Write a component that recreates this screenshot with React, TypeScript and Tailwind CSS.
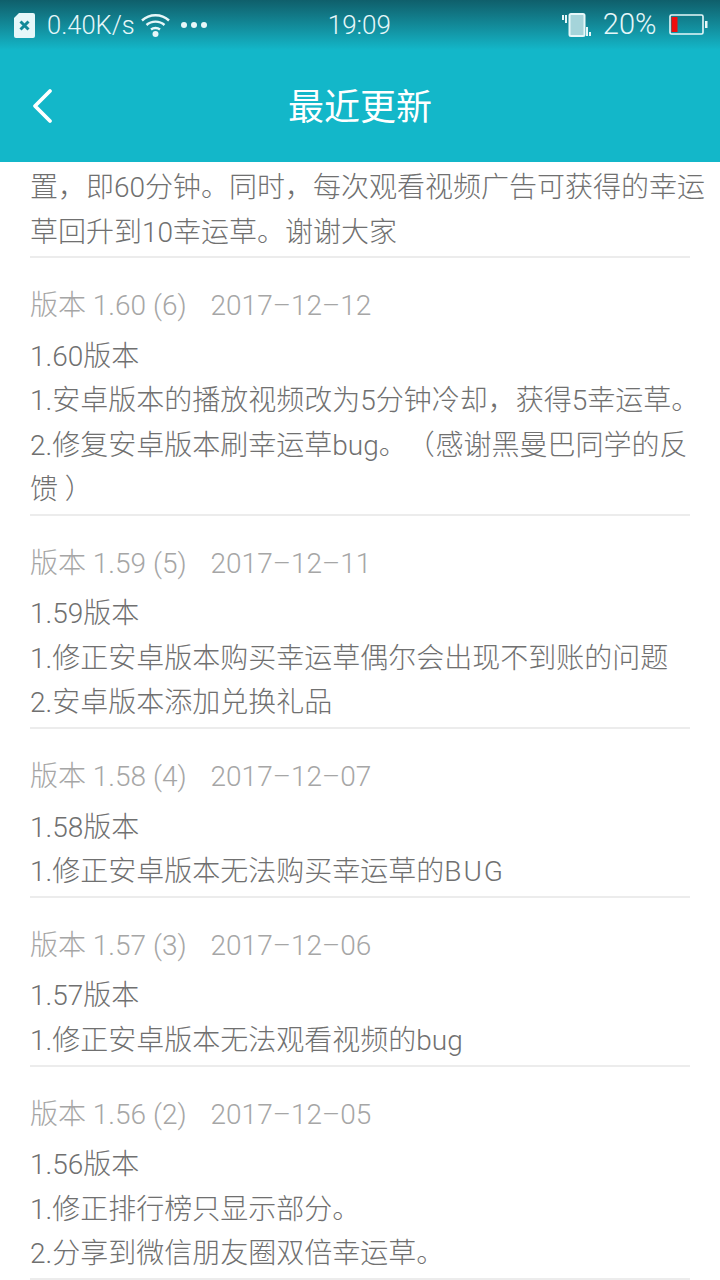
const sections = [
  { v: "版本 1.60 (6)", d: "2017–12–12", lines: ["1.60版本", "1.安卓版本的播放视频改为5分钟冷却，获得5幸运草。", "2.修复安卓版本刷幸运草bug。（ 感谢黑曼巴同学的反", "馈 ）"] },
  { v: "版本 1.59 (5)", d: "2017–12–11", lines: ["1.59版本", "1.修正安卓版本购买幸运草偶尔会出现不到账的问题", "2.安卓版本添加兑换礼品"] },
  { v: "版本 1.58 (4)", d: "2017–12–07", lines: ["1.58版本", "1.修正安卓版本无法购买幸运草的BUG"] },
  { v: "版本 1.57 (3)", d: "2017–12–06", lines: ["1.57版本", "1.修正安卓版本无法观看视频的bug"] },
  { v: "版本 1.56 (2)", d: "2017–12–05", lines: ["1.56版本", "1.修正排行榜只显示部分。", "2.分享到微信朋友圈双倍幸运草。"] },
];

const font = "font-['Roboto','Noto_Sans_CJK_SC',sans-serif]";

export default function App() {
  return (
    <div className={`w-[720px] h-[1280px] overflow-hidden bg-white font-light ${font}`}>
      <header className="h-[162px] bg-[#13b7c9] relative">
        <div className="h-[50px] bg-gradient-to-b from-[#0f5f6b] to-[#13b7c9] flex items-center text-[#e6f7f9] text-[25.5px] pl-[14px] pr-[12px]">
          <svg width="21" height="25" viewBox="0 0 21 25" className="shrink-0">
            <path d="M5 0H19a2 2 0 0 1 2 2V23a2 2 0 0 1-2 2H2a2 2 0 0 1-2-2V5Z" fill="#e6f7f9" />
            <path d="M6.5 8.5L14.5 16.5M14.5 8.5L6.5 16.5" stroke="#148a99" strokeWidth="3" />
          </svg>
          <span className="ml-[12px] w-[88px]">0.40K/s</span>
          <svg width="30" height="26" viewBox="0 0 30 26" className="ml-[6px] shrink-0" fill="none" stroke="#e6f7f9" strokeWidth="2.4">
            <path d="M1 8.5C8.5 1.5 20.5 1.5 28 8.5" />
            <path d="M5.5 13C10.5 8.5 18.5 8.5 23.5 13" />
            <path d="M10 17.5C12.5 15.5 16.5 15.5 19 17.5" />
            <circle cx="14.5" cy="22" r="3" fill="#e6f7f9" stroke="none" />
          </svg>
          <div className="ml-[10px] flex gap-[4px]">
            <i className="w-[6px] h-[6px] rounded-full bg-[#e6f7f9]" />
            <i className="w-[6px] h-[6px] rounded-full bg-[#e6f7f9]" />
            <i className="w-[6px] h-[6px] rounded-full bg-[#e6f7f9]" />
          </div>
          <span className="ml-[121px] w-[65px] text-[26px]">19:09</span>
          <svg width="30" height="26" viewBox="0 0 30 26" className="ml-[170px] shrink-0">
            <rect x="1" y="3" width="2" height="5" fill="#e6f7f9" />
            <rect x="4" y="3" width="2" height="8" fill="#e6f7f9" />
            <rect x="8.5" y="2" width="15" height="22" rx="1.5" fill="#a5d4da" stroke="#e6f7f9" strokeWidth="2" />
            <rect x="25" y="15" width="2" height="9" fill="#e6f7f9" />
            <rect x="28" y="20" width="2" height="4" fill="#e6f7f9" />
          </svg>
          <span className="ml-[12px] w-[57px] text-[29px]">20%</span>
          <svg width="39" height="22" viewBox="0 0 39 22" className="ml-[11px] shrink-0">
            <rect x="1" y="1" width="33" height="19" rx="1.5" fill="none" stroke="#e6f7f9" strokeWidth="1.6" />
            <rect x="2.5" y="3" width="6" height="15" fill="#f00d0d" />
            <rect x="36" y="7" width="2.5" height="7" fill="#e6f7f9" />
          </svg>
        </div>
        <div className="h-[112px] relative flex items-center justify-center text-white text-[36px] font-normal pt-[3px]">
          <span>最近更新</span>
          <svg width="24" height="36" viewBox="0 0 24 36" className="absolute left-[31px] top-[38px]" fill="none" stroke="white" strokeWidth="3.8" strokeLinecap="round" strokeLinejoin="round">
            <path d="M19 3L4 18L19 33" />
          </svg>
        </div>
      </header>
      <main className="px-[30px] text-[28px] leading-[44.5px] text-[#707070] whitespace-nowrap [text-spacing-trim:space-all]">
        <div className="border-b-2 border-[#ececec] h-[96px] pt-[4px]">
          <p>置，即60分钟。同时，每次观看视频广告可获得的幸运</p>
          <p>草回升到10幸运草。谢谢大家</p>
        </div>
        {sections.map((s) => (
          <section key={s.v} className="border-b-2 border-[#ececec] pt-[26px] pb-[1.25px]">
            <div className="flex gap-[24px] text-[#a6a6a6] mb-[6px]">
              <span>{s.v}</span>
              <span>{s.d}</span>
            </div>
            {s.lines.map((l) =>
              l.endsWith("BUG") ? (
                <p key={l}>
                  {l.slice(0, -3)}
                  <span className="tracking-[2px]">BUG</span>
                </p>
              ) : (
                <p key={l} className={l.includes("（") ? "[word-spacing:-6px]" : ""}>
                  {l}
                </p>
              )
            )}
          </section>
        ))}
      </main>
    </div>
  );
}
